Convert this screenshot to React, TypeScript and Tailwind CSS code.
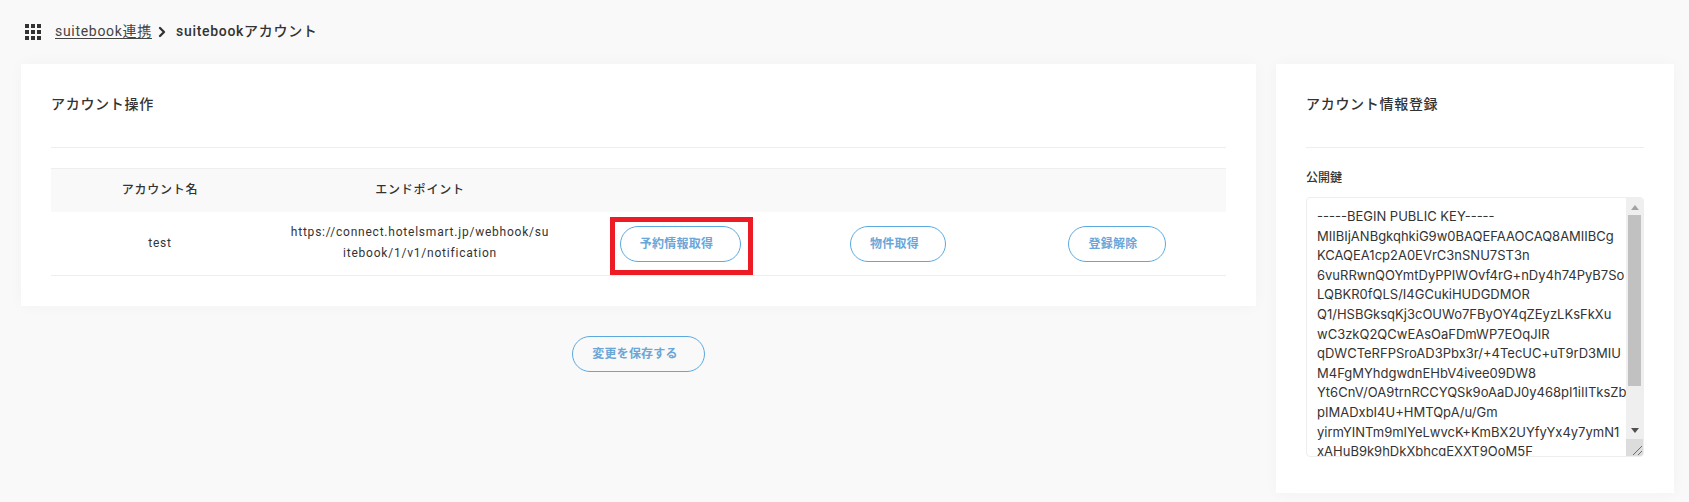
import { ChevronRight } from "lucide-react";

const publicKey = `-----BEGIN PUBLIC KEY-----
MIIBIjANBgkqhkiG9w0BAQEFAAOCAQ8AMIIBCg
KCAQEA1cp2A0EVrC3nSNU7ST3n
6vuRRwnQOYmtDyPPIWOvf4rG+nDy4h74PyB7So
LQBKR0fQLS/I4GCukiHUDGDMOR
Q1/HSBGksqKj3cOUWo7FByOY4qZEyzLKsFkXu
wC3zkQ2QCwEAsOaFDmWP7EOqJIR
qDWCTeRFPSroAD3Pbx3r/+4TecUC+uT9rD3MIU
M4FgMYhdgwdnEHbV4ivee09DW8
Yt6CnV/OA9trnRCCYQSk9oAaDJ0y468pI1iIITksZb
pIMADxbI4U+HMTQpA/u/Gm
yirmYINTm9mIYeLwvcK+KmBX2UYfyYx4y7ymN1
xAHuB9k9hDkXbhcgEXXT9OoM5F`;

const font = "font-['Roboto','Noto_Sans_CJK_JP',sans-serif]";

const PillButton = ({ label, className }: { label: string; className: string }) => (
  <button
    className={`h-9 rounded-full border border-[#5aaae0] pr-[7px] text-xs font-bold tracking-[0.02em] text-[#6ba6d8] ${className}`}
  >
    {label}
  </button>
);

const GridIcon = () => (
  <svg width="16" height="16" viewBox="0 0 16 16" fill="#333">
    {[0, 6, 12].map((y) =>
      [0, 6, 12].map((x) => <rect key={`${x}-${y}`} x={x} y={y} width="4" height="4" />),
    )}
  </svg>
);

export default function App() {
  return (
    <div className={`h-[502px] overflow-hidden bg-[#f9f9f9] text-[#333] ${font}`}>
      <div className="flex h-16 items-center pl-[25px] text-sm tracking-[0.05em]">
        <GridIcon />
        <a className="mb-[2px] ml-[14px] font-normal text-[#444] underline underline-offset-2">suitebook連携</a>
        <ChevronRight className="ml-[2px] mr-[6px] size-4" strokeWidth={3.5} />
        <span className="mb-[2px] font-medium">suitebookアカウント</span>
      </div>

      <div className="flex items-start gap-5 pl-[21px] pr-[15px]">
        <div className="flex-1">
          <section className="h-[242px] bg-white px-[30px] shadow-[0_0_15px_rgba(0,0,0,0.03)]">
            <h2 className="flex h-[84px] items-center border-b border-[#eeeeee] pb-1 text-sm font-medium tracking-[0.05em]">
              アカウント操作
            </h2>
            <table className="mt-5 w-full table-fixed border-t border-[#eeeeee] text-xs tracking-[0.065em]">
              <colgroup>
                <col className="w-[218px]" />
                <col className="w-[302px]" />
                <col className="w-[218px]" />
                <col className="w-[218px]" />
                <col className="w-[219px]" />
              </colgroup>
              <thead>
                <tr className="h-[43px] bg-[#f9f9f9]">
                  <th className="font-medium">アカウント名</th>
                  <th className="font-medium">エンドポイント</th>
                  <th />
                  <th />
                  <th />
                </tr>
              </thead>
              <tbody>
                <tr className="h-[64px] border-b border-[#eeeeee]">
                  <td className="text-center">test</td>
                  <td className="break-all px-[21px] text-center leading-[21px]">
                    https://connect.hotelsmart.jp/webhook/suitebook/1/v1/notification
                  </td>
                  <td className="pt-[1px]">
                    <div className="flex justify-center">
                      <div className="relative flex">
                        <PillButton label="予約情報取得" className="w-[121px]" />
                        <span className="pointer-events-none absolute -bottom-[13px] -left-[10px] -right-[12px] -top-[9px] border-[5px] border-[#ed1c24]" />
                      </div>
                    </div>
                  </td>
                  <td className="pt-[1px]">
                    <div className="flex justify-center">
                      <PillButton label="物件取得" className="w-[96px]" />
                    </div>
                  </td>
                  <td className="pt-[1px]">
                    <div className="flex justify-center">
                      <PillButton label="登録解除" className="w-[98px]" />
                    </div>
                  </td>
                </tr>
              </tbody>
            </table>
          </section>
          <div className="mt-[30px] flex justify-center">
            <PillButton label="変更を保存する" className="w-[133px]" />
          </div>
        </div>

        <aside className="h-[429px] w-[398px] bg-white px-[30px] shadow-[0_0_15px_rgba(0,0,0,0.03)]">
          <h2 className="flex h-[84px] items-center border-b border-[#eeeeee] pb-1 text-sm font-medium tracking-[0.05em]">
            アカウント情報登録
          </h2>
          <label className="mt-[22px] block text-xs font-medium leading-[16px]">公開鍵</label>
          <div className="relative mt-[11px] h-[260px] overflow-hidden rounded border border-[#eeeeee]">
            <textarea
              readOnly
              wrap="off"
              value={publicKey}
              className="block h-full w-full resize-none overflow-hidden py-[9px] pl-[10px] font-['Inter',sans-serif] text-[13px] leading-[19.6px] text-[#333] outline-none"
            />
            <div className="absolute inset-y-0 right-0 flex w-[17px] flex-col bg-[#efefef]">
              <svg className="mb-[5px] mt-[7px] self-center" width="8" height="5" viewBox="0 0 8 5" fill="#a3a3a3">
                <path d="M4 0 8 5H0z" />
              </svg>
              <div className="mx-[2px] h-[171px] bg-[#c1c1c1]" />
              <svg className="mt-[42px] self-center" width="8" height="5" viewBox="0 0 8 5" fill="#505050">
                <path d="M0 0h8L4 5z" />
              </svg>
              <div className="relative mt-auto h-[17px] bg-[#dcdcdc]">
                <svg className="absolute bottom-0 right-0" width="17" height="17" viewBox="0 0 17 17" stroke="#6b6b6b" strokeWidth="1" fill="none">
                  <path d="M7 16 16 7M12 16l4-4" />
                </svg>
              </div>
            </div>
          </div>
        </aside>
      </div>
    </div>
  );
}
